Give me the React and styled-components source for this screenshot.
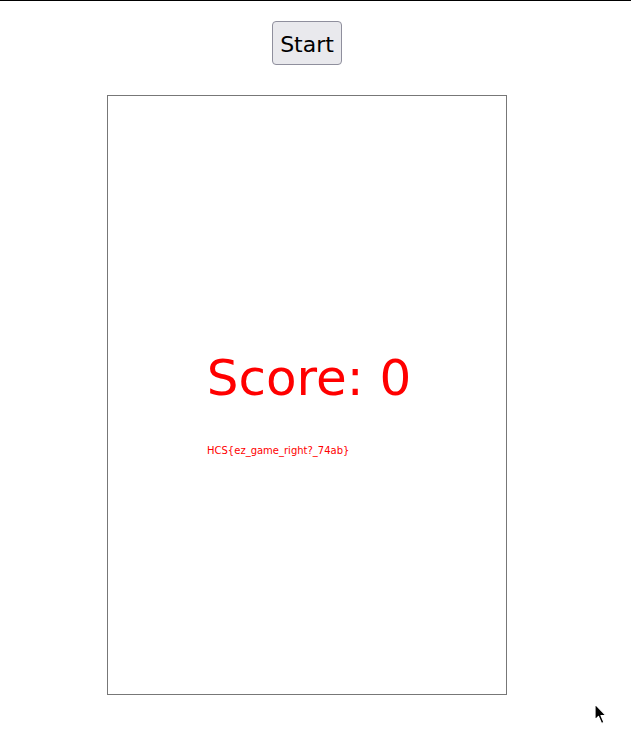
import React from "react";
import styled, { createGlobalStyle } from "styled-components";

const GlobalStyle = createGlobalStyle`
  html, body {
    margin: 0;
    padding: 0;
    background: #ffffff;
    font-family: "DejaVu Sans", "Liberation Sans", sans-serif;
  }
`;

export default function App() {
  return (
    <>
      <GlobalStyle />
      <Page>
        <TopRule />
        <Stage>
          <StartButton type="button">Start</StartButton>
          <Board>
            <Score>Score: 0</Score>
            <Flag>HCS{"{"}ez_game_right?_74ab{"}"}</Flag>
          </Board>
        </Stage>
        <Cursor viewBox="0 0 14 22" aria-hidden="true">
          <path
            d="M1 1 L1 17 L4.5 13.5 L7.5 20.5 L10 19.4 L7 12.6 L12 12.6 Z"
            fill="#000"
            stroke="#fff"
            strokeWidth="1.2"
            strokeLinejoin="round"
          />
        </Cursor>
      </Page>
    </>
  );
}

const Page = styled.div`
  position: relative;
  width: 631px;
  height: 749px;
  overflow: hidden;
`;

const TopRule = styled.div`
  height: 1px;
  background: #000000;
`;

const Stage = styled.div`
  width: 614px;
  display: flex;
  flex-direction: column;
  align-items: center;
  padding-top: 20px;
  gap: 30px;
`;

const StartButton = styled.button`
  box-sizing: border-box;
  height: 44px;
  width: 70px;
  padding: 2px 0 0;
  font-family: "DejaVu Sans", sans-serif;
  font-size: 22px;
  color: #000;
  background: #e9e9ed;
  border: 1px solid #8f8f9d;
  border-radius: 4px;
`;

const Board = styled.div`
  box-sizing: border-box;
  width: 400px;
  height: 600px;
  border: 1px solid #777777;
  padding-top: 257px;
  display: flex;
  flex-direction: column;
`;

const Score = styled.div`
  padding-left: 4px;
  font-size: 50px;
  line-height: 50px;
  color: #ff0000;
  text-align: center;
`;

const Flag = styled.div`
  margin-top: 43px;
  padding-left: 99px;
  font-size: 10px;
  line-height: 10px;
  color: #ff0000;
`;

const Cursor = styled.svg`
  position: absolute;
  left: 594px;
  top: 703px;
  width: 14px;
  height: 22px;
`;
